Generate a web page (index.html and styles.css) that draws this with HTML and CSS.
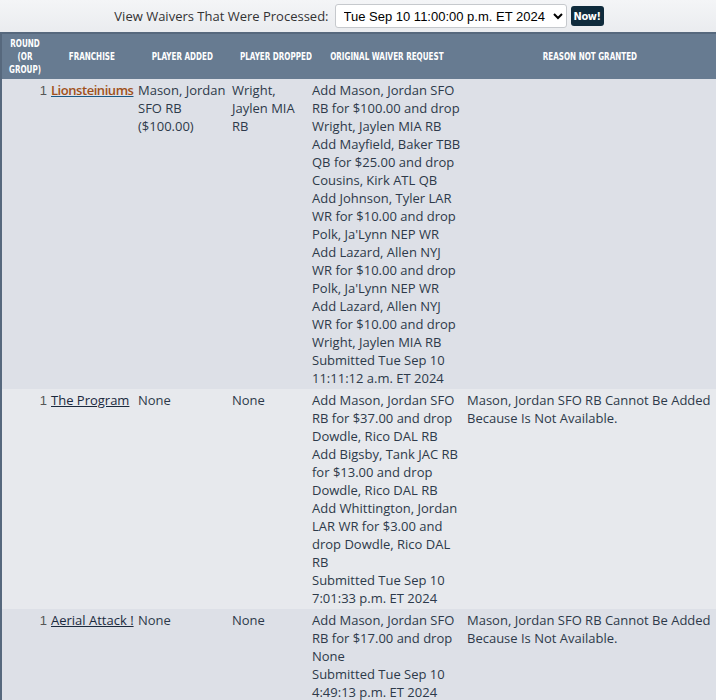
FILE: index.html
```html
<!DOCTYPE html>
<html lang="en">
<head>
    <meta charset="UTF-8">
    <title>Waiver Results</title>
    <link rel="stylesheet" href="styles.css">
</head>
<body>
    <form class="picker">
        <label for="when">View Waivers That Were Processed:</label>
        <select id="when" class="when">
            <option>Tue Sep 10 11:00:00 p.m. ET 2024</option>
        </select>
        <button type="button" class="now">Now!</button>
    </form>

    <table class="report">
        <colgroup>
            <col class="c-round">
            <col class="c-franchise">
            <col class="c-added">
            <col class="c-dropped">
            <col class="c-request">
            <col class="c-reason">
        </colgroup>
        <thead>
            <tr>
                <th><span>Round<br>(or<br>Group)</span></th>
                <th><span>Franchise</span></th>
                <th><span>Player Added</span></th>
                <th><span>Player Dropped</span></th>
                <th><span>Original Waiver Request</span></th>
                <th><span>Reason Not Granted</span></th>
            </tr>
        </thead>
        <tbody>
            <tr class="odd">
                <td class="round">1</td>
                <td><a href="#" class="mine">Lionsteiniums</a></td>
                <td>Mason, Jordan SFO RB ($100.00)</td>
                <td>Wright, Jaylen MIA RB</td>
                <td>Add Mason, Jordan SFO RB for $100.00 and drop Wright, Jaylen MIA RB<br>
                    Add Mayfield, Baker TBB QB for $25.00 and drop Cousins, Kirk ATL QB<br>
                    Add Johnson, Tyler LAR WR for $10.00 and drop Polk, Ja'Lynn NEP WR<br>
                    Add Lazard, Allen NYJ WR for $10.00 and drop Polk, Ja'Lynn NEP WR<br>
                    Add Lazard, Allen NYJ WR for $10.00 and drop Wright, Jaylen MIA RB<br>
                    Submitted Tue Sep 10 11:11:12 a.m. ET 2024</td>
                <td></td>
            </tr>
            <tr class="even">
                <td class="round">1</td>
                <td><a href="#">The Program</a></td>
                <td>None</td>
                <td>None</td>
                <td>Add Mason, Jordan SFO RB for $37.00 and drop Dowdle, Rico DAL RB<br>
                    Add Bigsby, Tank JAC RB for $13.00 and drop Dowdle, Rico DAL RB<br>
                    Add Whittington, Jordan LAR WR for $3.00 and drop Dowdle, Rico DAL RB<br>
                    Submitted Tue Sep 10 7:01:33 p.m. ET 2024</td>
                <td>Mason, Jordan SFO RB Cannot Be Added Because Is Not Available.</td>
            </tr>
            <tr class="odd">
                <td class="round">1</td>
                <td><a href="#">Aerial Attack !</a></td>
                <td>None</td>
                <td>None</td>
                <td>Add Mason, Jordan SFO RB for $17.00 and drop None<br>
                    Submitted Tue Sep 10 4:49:13 p.m. ET 2024</td>
                <td>Mason, Jordan SFO RB Cannot Be Added Because Is Not Available.</td>
            </tr>
        </tbody>
    </table>
</body>
</html>
```

FILE: styles.css
```css
body {
    margin: 0;
    font-family: "Open Sans", Arial, sans-serif;
    font-size: 13px;
    line-height: 18px;
    color: #2d3a4a;
    background-color: #eef0f3;
}
.picker {
    display: flex;
    justify-content: center;
    align-items: center;
    gap: 4px;
    height: 32px;
    margin: 0;
    padding-left: 2px;
    background: linear-gradient(#f4f5f7, #eaecef);
}
.picker label {
    color: #333;
    margin-right: 2px;
}
.when {
    font-family: "Liberation Sans", Arial, sans-serif;
    font-size: 13px;
    height: 24px;
    padding: 0 4px;
    color: #000;
    background-color: #fff;
    border: 1px solid #c6c9cd;
    border-radius: 3px;
}
.now {
    font-family: "DejaVu Sans Condensed", sans-serif;
    font-size: 11px;
    font-weight: bold;
    letter-spacing: -0.4px;
    color: #fff;
    background-color: #0f2b3c;
    border: none;
    border-radius: 3px;
    height: 20px;
    padding: 0 3px;
}
.report {
    width: 100%;
    table-layout: fixed;
    border-collapse: collapse;
    border-top: 2px solid #56687d;
    border-left: 2px solid #56687d;
}
.c-round { width: 47px; }
.c-franchise { width: 87px; }
.c-added { width: 94px; }
.c-dropped { width: 80px; }
.c-request { width: 155px; }
th {
    background-color: #677b91;
    color: #fff;
    font-family: "DejaVu Sans Condensed", sans-serif;
    font-size: 10px;
    font-weight: bold;
    line-height: 13px;
    text-transform: uppercase;
    text-align: center;
    white-space: nowrap;
    padding: 3px 2px;
    height: 39px;
}
/* squeeze the header caps to a narrow bold face */
th span {
    display: inline-block;
    transform: scaleX(0.8);
}
td {
    vertical-align: top;
    text-align: left;
    padding: 2px 2px 2px 3px;
}
tr.odd td {
    background-color: #dde0e7;
}
tr.even td {
    background-color: #e7e9ed;
}
td.round {
    text-align: right;
    color: #555;
    font-family: "Liberation Sans", Arial, sans-serif;
    padding-top: 3px;
    padding-right: 1px;
}
td a {
    color: #1b2a3e;
    white-space: nowrap;
}
td a.mine {
    color: #a0501a;
    font-weight: 600;
    letter-spacing: -0.45px;
    text-decoration-color: #1d5a86;
}
```
